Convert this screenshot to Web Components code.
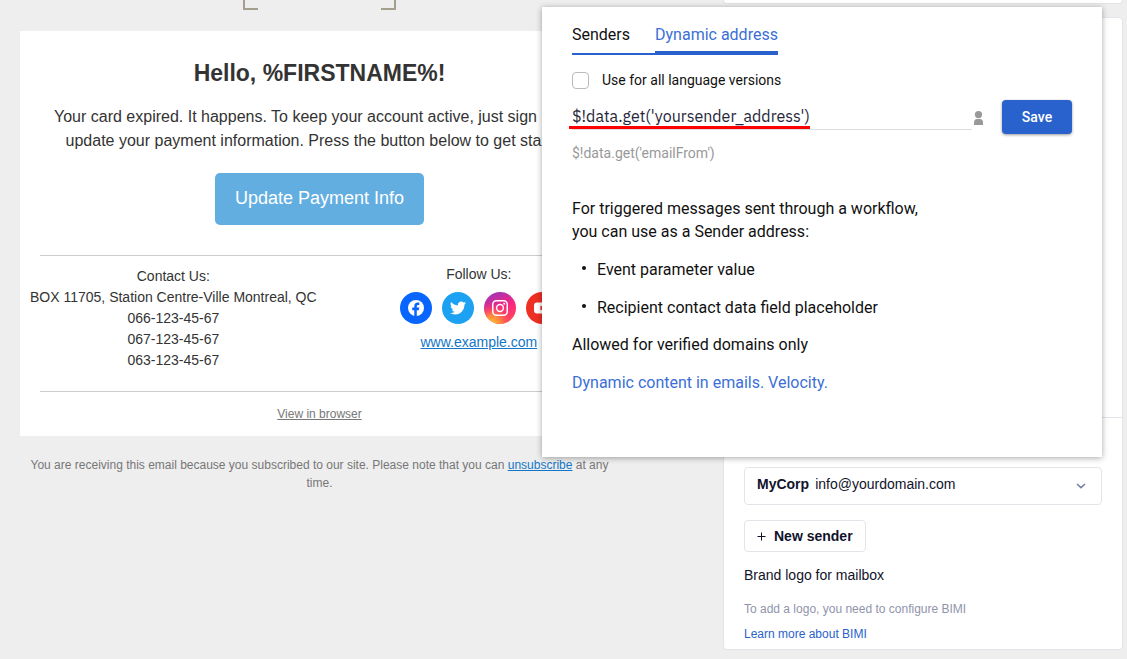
<!DOCTYPE html>
<html lang="en">
<head>
<meta charset="utf-8">
<meta name="viewport" content="width=device-width, initial-scale=1">
<title>Sender settings</title>
<style>
    body {
        margin: 0;
        background-color: #eeeeee;
        font-family: "Liberation Sans", Arial, sans-serif;
        color: #333333;
        overflow: hidden;
    }
</style>
</head>
<body>
<message-editor>
    <email-preview slot="preview">
        <span slot="title">Hello, %FIRSTNAME%!</span>
        <span slot="text">Your card expired. It happens. To keep your account active, just sign in and update your payment information. Press the button below to get started.</span>
        <span slot="action">Update Payment Info</span>
    </email-preview>
    <sender-settings slot="settings"></sender-settings>
    <dynamic-address slot="popup"></dynamic-address>
</message-editor>

<script>
(() => {
    const define = (name, html) => {
        const template = document.createElement("template")
        template.innerHTML = html

        customElements.define(name, class extends HTMLElement {
            constructor() {
                super()
                this.attachShadow({ mode: "open" }).append(template.content.cloneNode(true))
            }
        })
    }

    define("message-editor", `
        <style>
            :host {
                display: flex;
                position: relative;
                box-sizing: border-box;
                min-height: 100vh;
                padding-right: 4px;
            }

            main {
                flex: 1;
                min-width: 0;
                padding: 0 20px;
            }

            aside {
                width: 400px;
            }

            /* the popup floats over both panes */
            .popup {
                position: absolute;
                top: 7px;
                right: 25px;
                width: 560px;
            }
        </style>
        <main><slot name="preview"></slot></main>
        <aside><slot name="settings"></slot></aside>
        <div class="popup"><slot name="popup"></slot></div>
    `)

    define("social-icon", `
        <style>
            :host {
                display: block;
                width: 32px;
                height: 32px;
            }

            a {
                display: block;
            }

            ::slotted(svg) {
                display: block;
            }
        </style>
        <a href="#" aria-label="Social profile"><slot></slot></a>
    `)

    define("email-preview", `
        <style>
            :host {
                display: block;
                max-width: 599px;
                text-align: center;
            }

            .logo {
                display: flex;
                justify-content: center;
                height: 31px;
            }

            .logo svg {
                display: block;
            }

            .card {
                background-color: #ffffff;
                padding: 28px 20px 14px;
            }

            h1 {
                margin: 0;
                font-size: 23px;
                line-height: 28px;
            }

            .text {
                margin: 18px 0 20px;
                padding: 0 10px;
                font-size: 16px;
                line-height: 24px;
            }

            .action {
                padding: 0 20px 2px;
                height: 52px;
                border: 0;
                border-radius: 5px;
                background-color: #62aee1;
                color: #ffffff;
                font-family: inherit;
                font-size: 18px;
            }

            hr {
                margin: 30px 0 10px;
                border: 0;
                border-top: 1px solid #cccccc;
            }

            .columns {
                display: flex;
                gap: 32px;
                margin: 0 -10px;
                font-size: 14px;
                line-height: 21px;
            }

            .follow {
                flex: 1;
            }

            .follow span {
                display: block;
                line-height: 17px;
            }

            .icons {
                display: flex;
                justify-content: center;
                gap: 10px;
                margin: 9px 0 8px;
            }

            .follow a {
                color: #1376c8;
            }

            .columns + hr {
                margin-top: 20px;
                margin-bottom: 14px;
            }

            .browser {
                display: block;
                font-size: 12px;
                line-height: 16px;
                color: #777777;
            }

            .note {
                margin: 20px 10px 0;
                font-size: 12px;
                line-height: 18px;
                color: #777777;
            }

            .note a {
                color: #1376c8;
            }
        </style>
        <div class="logo">
            <svg width="153" height="11" viewBox="0 0 153 11" fill="none" stroke="#a5a08e" stroke-width="2">
                <path d="M1 0V9H15M152 0V9H138"/>
            </svg>
        </div>
        <div class="card">
            <h1><slot name="title"></slot></h1>
            <p class="text"><slot name="text"></slot></p>
            <button class="action"><slot name="action"></slot></button>
            <hr>
            <div class="columns">
                <div>
                    Contact Us:<br>
                    BOX 11705, Station Centre-Ville Montreal, QC<br>
                    066-123-45-67<br>
                    067-123-45-67<br>
                    063-123-45-67
                </div>
                <div class="follow">
                    <span>Follow Us:</span>
                    <div class="icons">
                        <social-icon>
                            <svg width="32" height="32" viewBox="0 0 32 32">
                                <circle cx="16" cy="16" r="16" fill="#0866ff"/>
                                <circle cx="16" cy="16" r="8" fill="#fff"/>
                                <path d="M14.3 24.5v-6.3h-2.1v-2.6h2.1v-1.4c0-2.7 1.3-3.8 3.4-3.8.7 0 1.2.1 1.6.2v2.3h-1.1c-1 0-1.4.5-1.4 1.5v1.2h2.5l-.5 2.6h-2v6.3z" fill="#0866ff"/>
                            </svg>
                        </social-icon>
                        <social-icon>
                            <svg width="32" height="32" viewBox="0 0 32 32">
                                <circle cx="16" cy="16" r="16" fill="#1da1f2"/>
                                <path transform="translate(8 8) scale(.667)" d="M23.95 4.57a10 10 0 0 1-2.82.77 4.96 4.96 0 0 0 2.16-2.72c-.95.55-2 .95-3.13 1.18a4.92 4.92 0 0 0-8.38 4.48C7.69 8.1 4.07 6.13 1.64 3.16a4.92 4.92 0 0 0 1.52 6.57 4.9 4.9 0 0 1-2.23-.61v.06a4.92 4.92 0 0 0 3.95 4.83 5 5 0 0 1-2.21.08 4.94 4.94 0 0 0 4.6 3.42A9.87 9.87 0 0 1 0 19.54a14 14 0 0 0 7.55 2.21c9.05 0 14-7.5 14-13.98 0-.21 0-.42-.02-.63a9.94 9.94 0 0 0 2.42-2.57z" fill="#fff"/>
                            </svg>
                        </social-icon>
                        <social-icon>
                            <svg width="32" height="32" viewBox="0 0 32 32">
                                <defs>
                                    <linearGradient id="sky" x1=".3" y1="0" x2=".7" y2="1">
                                        <stop offset="0" stop-color="#9b36b7"/>
                                        <stop offset=".5" stop-color="#fb2581"/>
                                        <stop offset="1" stop-color="#ff4b55"/>
                                    </linearGradient>
                                    <radialGradient id="sun" cx=".25" cy="1" r=".65">
                                        <stop offset="0" stop-color="#ffc72e"/>
                                        <stop offset=".4" stop-color="#ff9238" stop-opacity=".9"/>
                                        <stop offset="1" stop-color="#ff4060" stop-opacity="0"/>
                                    </radialGradient>
                                </defs>
                                <circle cx="16" cy="16" r="16" fill="url(#sky)"/>
                                <circle cx="16" cy="16" r="16" fill="url(#sun)"/>
                                <g fill="none" stroke="#fff" stroke-width="1.5">
                                    <rect x="8.75" y="8.75" width="14.5" height="14.5" rx="3.7"/>
                                    <circle cx="16" cy="16" r="3.4"/>
                                </g>
                                <circle cx="20.2" cy="11.8" r="1" fill="#fff"/>
                            </svg>
                        </social-icon>
                        <social-icon>
                            <svg width="32" height="32" viewBox="0 0 32 32">
                                <circle cx="16" cy="16" r="16" fill="#ee3024"/>
                                <rect x="8" y="10.5" width="16" height="11" rx="3" fill="#fff"/>
                                <path d="M14.4 13.5v5l4.2-2.5z" fill="#ee3024"/>
                            </svg>
                        </social-icon>
                    </div>
                    <a href="#">www.example.com</a>
                </div>
            </div>
            <hr>
            <a class="browser" href="#">View in browser</a>
        </div>
        <p class="note">You are receiving this email because you subscribed to our site. Please note that you can <a href="#">unsubscribe</a> at any<br>time.</p>
    `)

    define("sender-settings", `
        <style>
            :host {
                display: block;
                color: #11132a;
                font-size: 14px;
            }

            .panel {
                background-color: #ffffff;
                border: 1px solid #e3e4ea;
                border-radius: 4px;
            }

            .previous {
                height: 3px;
                border-top: 0;
                border-radius: 0 0 4px 4px;
                margin-bottom: 13px;
            }

            .summary {
                height: 399px;
                border-bottom: 1px solid #e3e4ea;
            }

            .sender {
                padding: 49px 20px 5px;
            }

            .field {
                display: flex;
                align-items: center;
                gap: 6px;
                box-sizing: border-box;
                height: 38px;
                padding: 0 15px 4px 12px;
                border: 1px solid #e3e4ea;
                border-radius: 4px;
            }

            select {
                flex: 1;
                min-width: 0;
                padding: 0;
                border: 0;
                appearance: none;
                background: none;
                color: inherit;
                font: inherit;
            }

            .field svg {
                margin-top: 4px;
            }

            button {
                display: flex;
                align-items: center;
                gap: 8px;
                height: 32px;
                margin: 15px 0 13px;
                padding: 0 12px;
                border: 1px solid #e3e4ea;
                border-radius: 4px;
                background: none;
                color: inherit;
                font: bold 14px "Liberation Sans", Arial, sans-serif;
            }

            h2, p {
                margin: 0;
                font-size: 14px;
                font-weight: normal;
                line-height: 20px;
            }

            .hint {
                margin: 14px 0 5px;
                font-size: 12px;
                color: #8f94ab;
            }

            a {
                display: block;
                font-size: 12px;
                line-height: 20px;
                color: #2962cc;
                text-decoration: none;
            }
        </style>
        <div class="panel previous"></div>
        <div class="panel">
            <div class="summary"></div>
            <div class="sender">
                <div class="field">
                    <label for="sender"><b>MyCorp</b></label>
                    <select id="sender">
                        <option>info@yourdomain.com</option>
                    </select>
                    <svg width="10" height="6" viewBox="0 0 10 6" fill="none" stroke="#7880a3" stroke-width="1.6">
                        <path d="M1 1l4 3.6L9 1"/>
                    </svg>
                </div>
                <button>
                    <svg width="9" height="9" viewBox="0 0 9 9" stroke="#11132a">
                        <path d="M4.5 .5v8M.5 4.5h8"/>
                    </svg>
                    New sender
                </button>
                <h2>Brand logo for mailbox</h2>
                <p class="hint">To add a logo, you need to configure BIMI</p>
                <a href="#">Learn more about BIMI</a>
            </div>
        </div>
    `)

    define("dynamic-address", `
        <style>
            :host {
                display: block;
                padding: 16px 30px 63px;
                background-color: #ffffff;
                box-shadow: 0 1px 6px rgba(0, 0, 0, 0.35);
                font-family: Roboto, sans-serif;
                font-size: 16px;
                line-height: 23px;
                color: #111111;
            }

            .tabs {
                display: flex;
            }

            .tabs button {
                padding: 0 25px 6px 0;
                border: 0;
                border-bottom: 2px solid #2962cc;
                background: none;
                color: inherit;
                font: inherit;
                line-height: 24px;
            }

            .tabs button[aria-selected="true"] {
                padding: 0 0 4px;
                border-bottom-width: 4px;
                color: #3b6fd6;
            }

            .all {
                display: flex;
                align-items: center;
                gap: 13px;
                margin: 16px 0 11px;
                font-size: 14px;
                line-height: 18px;
            }

            input[type="checkbox"] {
                width: 17px;
                height: 17px;
                margin: 0;
                border: 1px solid #bbbbbb;
                border-radius: 4px;
                appearance: none;
            }

            .row {
                display: flex;
                align-items: flex-start;
            }

            .address {
                position: relative;
                flex: 1;
            }

            input[type="text"] {
                display: block;
                box-sizing: border-box;
                width: 100%;
                height: 30px;
                padding: 2px 0 0;
                border: 0;
                border-bottom: 1px solid #dddddd;
                outline: 0;
                background: none;
                color: #25253a;
                font: 16px "IBM Plex Sans", "Noto Sans", sans-serif;
            }

            /* red marker over the start of the field's line */
            .marker {
                position: absolute;
                left: -3px;
                bottom: 1px;
                width: 241px;
                height: 3px;
                background-color: #fe0000;
            }

            .row svg {
                margin: 11px 19px 0 2px;
            }

            .save {
                width: 70px;
                height: 34px;
                border: 0;
                border-radius: 4px;
                background-color: #2962cc;
                box-shadow: 0 1px 3px rgba(0, 0, 0, 0.4);
                color: #ffffff;
                font: 500 14px Roboto, sans-serif;
            }

            .hint {
                margin: 9px 0 34px;
                font-size: 14px;
                line-height: 20px;
                color: #999999;
            }

            p {
                margin: 0 0 15px;
            }

            ul {
                display: flex;
                flex-direction: column;
                gap: 15px;
                margin: 0 0 14px;
                padding: 0;
                list-style: none;
            }

            li {
                display: flex;
                align-items: center;
                gap: 11px;
                padding-left: 10px;
            }

            li::before {
                content: "";
                width: 4px;
                height: 4px;
                margin-bottom: 3px;
                border-radius: 50%;
                background-color: #111111;
            }

            a {
                color: #3b6fd6;
                text-decoration: none;
            }
        </style>
        <div class="tabs" role="tablist">
            <button role="tab" aria-selected="false">Senders</button>
            <button role="tab" aria-selected="true">Dynamic address</button>
        </div>
        <label class="all"><input type="checkbox">Use for all language versions</label>
        <div class="row">
            <div class="address">
                <input type="text" aria-label="Sender address" value="$!data.get('yoursender_address')">
                <div class="marker"></div>
            </div>
            <svg width="9" height="14" viewBox="0 0 9 14" fill="#999999">
                <circle cx="4.5" cy="3.6" r="3.6"/>
                <path d="M0 14v-2.500C0 9.200 1.200 8 3 8h3c1.800 0 3 1.200 3 3.500V14z"/>
            </svg>
            <button class="save">Save</button>
        </div>
        <p class="hint">$!data.get('emailFrom')</p>
        <p>For triggered messages sent through a workflow,<br>you can use as a Sender address:</p>
        <ul>
            <li>Event parameter value</li>
            <li>Recipient contact data field placeholder</li>
        </ul>
        <p>Allowed for verified domains only</p>
        <a href="#">Dynamic content in emails. Velocity.</a>
    `)
})()
</script>
</body>
</html>
